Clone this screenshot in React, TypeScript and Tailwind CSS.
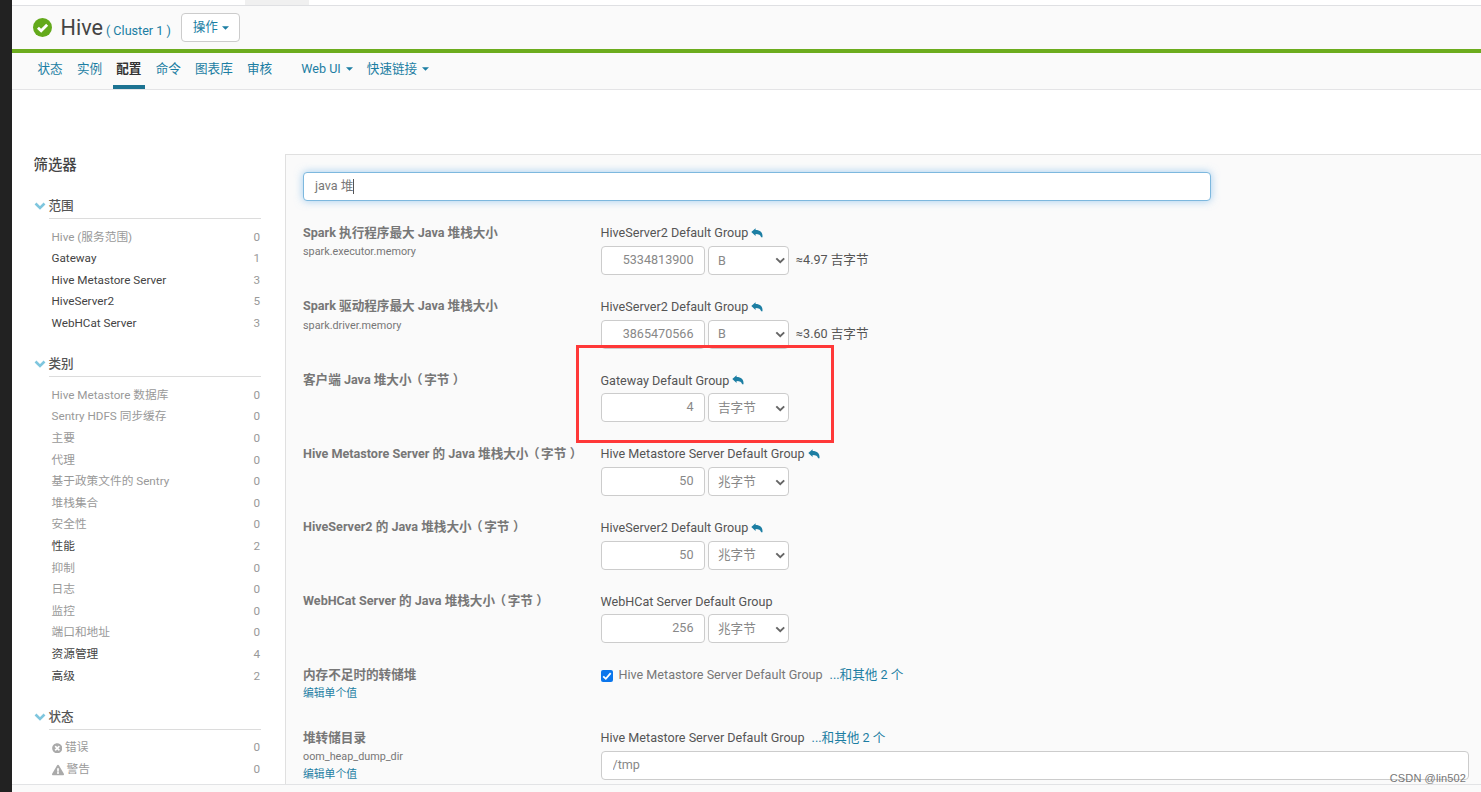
import React from 'react';
import { FaTimesCircle, FaExclamationTriangle } from 'react-icons/fa';

interface IFilterItem {
  name: string;
  count: number;
  icon?: React.ReactNode;
}

interface IProperty {
  label: string;
  note?: string;
  name?: string;
  group: string;
  reset?: boolean;
  value: string;
  unit: string;
  hint?: string;
}

const scopes: IFilterItem[] = [
  { name: 'Hive (服务范围)', count: 0 },
  { name: 'Gateway', count: 1 },
  { name: 'Hive Metastore Server', count: 3 },
  { name: 'HiveServer2', count: 5 },
  { name: 'WebHCat Server', count: 3 },
];

const categories: IFilterItem[] = [
  { name: 'Hive Metastore 数据库', count: 0 },
  { name: 'Sentry HDFS 同步缓存', count: 0 },
  { name: '主要', count: 0 },
  { name: '代理', count: 0 },
  { name: '基于政策文件的 Sentry', count: 0 },
  { name: '堆栈集合', count: 0 },
  { name: '安全性', count: 0 },
  { name: '性能', count: 2 },
  { name: '抑制', count: 0 },
  { name: '日志', count: 0 },
  { name: '监控', count: 0 },
  { name: '端口和地址', count: 0 },
  { name: '资源管理', count: 4 },
  { name: '高级', count: 2 },
];

const statuses: IFilterItem[] = [
  { name: '错误', count: 0, icon: <FaTimesCircle className="mr-[3px] size-[10.5px] text-[#aaa]" /> },
  { name: '警告', count: 0, icon: <FaExclamationTriangle className="mr-[3px] size-[12px] text-[#aaa]" /> },
];

const properties: IProperty[] = [
  { label: 'Spark 执行程序最大 Java 堆栈大小', name: 'spark.executor.memory', group: 'HiveServer2 Default Group', reset: true, value: '5334813900', unit: 'B', hint: '≈4.97 吉字节' },
  { label: 'Spark 驱动程序最大 Java 堆栈大小', name: 'spark.driver.memory', group: 'HiveServer2 Default Group', reset: true, value: '3865470566', unit: 'B', hint: '≈3.60 吉字节' },
  { label: '客户端 Java 堆大小', note: '字节', group: 'Gateway Default Group', reset: true, value: '4', unit: '吉字节' },
  { label: 'Hive Metastore Server 的 Java 堆栈大小', note: '字节', group: 'Hive Metastore Server Default Group', reset: true, value: '50', unit: '兆字节' },
  { label: 'HiveServer2 的 Java 堆栈大小', note: '字节', group: 'HiveServer2 Default Group', reset: true, value: '50', unit: '兆字节' },
  { label: 'WebHCat Server 的 Java 堆栈大小', note: '字节', group: 'WebHCat Server Default Group', value: '256', unit: '兆字节' },
];

const tabs = ['状态', '实例', '配置', '命令', '图表库', '审核'];

function Chevron({ className }: { className: string }) {
  return (
    <svg viewBox="0 0 12 8" className={className} fill="none" stroke="currentColor">
      <path d="M1.5 1.5 L6 6 L10.5 1.5" />
    </svg>
  );
}

function Caret({ className }: { className: string }) {
  return (
    <svg viewBox="0 0 8 4" className={className} fill="currentColor">
      <path d="M0 0 H8 L4 4 Z" />
    </svg>
  );
}

// Arrow that resets a property to its default
function ResetIcon() {
  return (
    <svg viewBox="0 0 12 10" className="mb-px ml-[3px] h-[10px] w-3 text-[#1c7ea3]" fill="currentColor">
      <path d="M0.3 4 L4.6 0.2 V2 C9 2 12 4.2 11.5 9.2 H10.1 C9.6 7 7.8 6.1 4.6 6.1 V7.9 Z" />
    </svg>
  );
}

// Collapsible group in the left filter column
function FilterGroup({ title, items }: { title: string; items: IFilterItem[] }) {
  return (
    <section className="w-[227.5px]">
      <div className="flex h-[25px] items-start">
        <Chevron className="mt-[8px] mr-[3px] h-2 w-3 stroke-[2.6] text-[#7fc6de]" />
        <h3 className="h-[25px] flex-1 border-b border-[#dcdcdc] text-[12.6px] leading-[23px] font-medium text-[#555]">{title}</h3>
      </div>
      <ul className="pt-[7.6px] pl-[18px]">
        {items.map((item) => (
          <li key={item.name} className="flex h-[21.6px] items-center text-[11.7px] leading-[21.6px]">
            {item.icon}
            <span className={item.count ? 'text-[#444]' : 'text-[#999]'}>{item.name}</span>
            <span className="ml-auto pr-px text-[#999]">{item.count}</span>
          </li>
        ))}
      </ul>
    </section>
  );
}

// One numeric setting with its unit dropdown
function PropertyRow({ property }: { property: IProperty }) {
  return (
    <div className="flex h-[73.7px]">
      <div className="w-[297.5px] shrink-0">
        <p className="text-[12.6px] leading-[20.3px] font-bold whitespace-nowrap text-[#777]">
          {property.label}
          {property.note && (
            <>
              <span className="mr-[1.5px] -ml-[1.5px]">（</span>
              {property.note}
              <span className="ml-[3.5px]">）</span>
            </>
          )}
        </p>
        {property.name && <p className="text-[10.8px] leading-[18px] text-[#777]">{property.name}</p>}
      </div>
      <div>
        <div className="flex h-[21px] items-center pt-[0.8px] text-[12.6px] text-[#555]">
          {property.group}
          {property.reset && <ResetIcon />}
        </div>
        <div className="mt-[2.3px] flex items-center">
          <input
            readOnly
            value={property.value}
            className="h-[29px] w-[104.5px] rounded-[4px] border border-[#ccc] bg-white pr-[10.5px] pb-[2px] text-right text-[12.6px] text-[#888]"
          />
          <div className="ml-[3px] flex h-[29px] w-[81px] items-center justify-between rounded-[4px] border border-[#ccc] bg-white pt-px pr-[3px] pl-[9px] text-[12.6px] text-[#888]">
            {property.unit}
            <Chevron className="h-[7px] w-[10.5px] stroke-[2.2] text-[#666]" />
          </div>
          {property.hint && <span className="ml-[7px] text-[12.6px] leading-5 text-[#555]">{property.hint}</span>}
        </div>
      </div>
    </div>
  );
}

function App() {
  return (
    <div className="relative flex h-[792px] w-[1481px] overflow-hidden bg-white font-[Roboto,'Noto_Sans_CJK_SC',sans-serif]">
      <div className="w-3 shrink-0 bg-[#222]" />
      <div className="flex min-w-0 flex-1 flex-col">
        <div className="h-[6px] shrink-0 border-b border-[#dfe0e3] pl-[233px]">
          <div className="h-[5px] w-16 bg-[#f0f0f0]" />
        </div>

        <header className="flex h-[47px] shrink-0 items-start border-b-[4px] border-[#6cac1e] bg-[#fafafa] pl-[21px]">
          <svg viewBox="0 0 20 20" className="mt-[12px] size-[19px]">
            <circle cx="10" cy="10" r="10" fill="#63a91b" />
            <path d="M5.2 10.2 L8.6 13.5 L14.9 7.2" fill="none" stroke="#fff" strokeWidth="3" />
          </svg>
          <h1 className="ml-[8.5px] text-[21.6px] leading-[44px] text-[#444]">Hive</h1>
          <span className="ml-[3px] pt-[2.5px] text-[12.6px] leading-[44px] text-[#1c7ea3]">( Cluster 1 )</span>
          <button className="mt-[7px] ml-[10.5px] flex h-[29px] w-[59px] items-center justify-center rounded-[4px] border border-[#ccc] bg-white text-[12.6px] text-[#1c7ea3]">
            操作
            <Caret className="ml-1 h-[4px] w-[7px]" />
          </button>
        </header>

        <nav className="flex h-[37px] shrink-0 border-b border-[#e4e4e6] bg-[#fafafa] pl-[22px] text-[12.6px] leading-[31px] text-[#1c7ea3]">
          {tabs.map((tab) => (
            <a
              key={tab}
              className={tab === '配置' ? 'mr-[7.2px] h-9 border-b-4 border-[#1c7392] px-[3.5px] font-bold text-[#333]' : 'mr-[7.2px] px-[3.5px]'}
            >
              {tab}
            </a>
          ))}
          <a className="ml-[18.5px] flex h-[31px] items-center">
            Web UI
            <Caret className="mt-px ml-[5px] h-[4px] w-[7px]" />
          </a>
          <a className="ml-[14px] flex h-[31px] items-center">
            快速链接
            <Caret className="mt-px ml-[5px] h-[4px] w-[7px]" />
          </a>
        </nav>

        <div className="flex h-[695px] shrink-0 border-b border-[#e2e3e5]">
          <aside className="w-[273px] shrink-0 pt-[64px] pl-[21.5px]">
            <h2 className="text-[14.4px] leading-6 font-medium text-[#444]">筛选器</h2>
            <div className="mt-[16px] flex flex-col gap-[17.7px]">
              <FilterGroup title="范围" items={scopes} />
              <FilterGroup title="类别" items={categories} />
              <FilterGroup title="状态" items={statuses} />
            </div>
          </aside>

          <main className="mt-16 flex-1 border-t border-l border-[#e0e0e0] bg-[#fafafa] pt-[17px] pl-[17px]">
            <div className="flex h-[29px] w-[908px] items-center rounded-[4px] border border-[#7db8de] bg-white pl-[11px] text-[12.6px] text-[#777] shadow-[0_0_8px_rgba(102,175,233,0.6)]">
              java 堆<span className="h-[15px] w-px bg-[#555]" />
            </div>

            <div className="mt-[21.7px]">
              {properties.map((property) => (
                <PropertyRow key={property.label} property={property} />
              ))}
            </div>

            <div className="flex h-[63px]">
              <div className="w-[297.5px] shrink-0">
                <p className="text-[12.6px] leading-[20px] font-bold text-[#777]">内存不足时的转储堆</p>
                <a className="block text-[10.8px] leading-[17px] text-[#1c7ea3]">编辑单个值</a>
              </div>
              <div className="flex h-[21px] items-center text-[12.6px] text-[#777]">
                <span className="mt-[2px] flex size-3 items-center justify-center rounded-[2px] bg-[#0b76ec]">
                  <svg viewBox="0 0 12 12" className="size-3">
                    <path d="M2.2 6.4 L4.8 8.8 L9.7 3.1" fill="none" stroke="#fff" strokeWidth="1.8" />
                  </svg>
                </span>
                <span className="ml-[6px]">Hive Metastore Server Default Group</span>
                <a className="ml-[7px] text-[#1c7ea3]">...和其他 2 个</a>
              </div>
            </div>

            <div className="flex">
              <div className="w-[297.5px] shrink-0">
                <p className="text-[12.6px] leading-[20px] font-bold text-[#777]">堆转储目录</p>
                <p className="text-[10.8px] leading-[18px] text-[#777]">oom_heap_dump_dir</p>
                <a className="block text-[10.8px] leading-[18px] text-[#1c7ea3]">编辑单个值</a>
              </div>
              <div>
                <div className="flex h-[21px] items-center pt-px text-[12.6px] text-[#555]">
                  Hive Metastore Server Default Group
                  <a className="ml-[7px] text-[#1c7ea3]">...和其他 2 个</a>
                </div>
                <input
                  readOnly
                  value="/tmp"
                  className="mt-[2.5px] block h-[29px] w-[868px] rounded-[4px] border border-[#ccc] bg-white pb-[2px] pl-[11px] text-[12.6px] text-[#888]"
                />
              </div>
            </div>
          </main>
        </div>
        <footer className="flex-1 bg-[#fafafa]" />
      </div>

      {/* Red marker round the Gateway heap setting */}
      <div className="absolute top-[345px] left-[576px] h-[98px] w-[258px] border-[3px] border-[#ff3838]" />
      <span className="absolute right-[15px] bottom-[6px] font-['Liberation_Sans',sans-serif] text-[11px] leading-4 tracking-[0.12px] text-[#777]">CSDN @lin502</span>
    </div>
  );
}

export default App;
